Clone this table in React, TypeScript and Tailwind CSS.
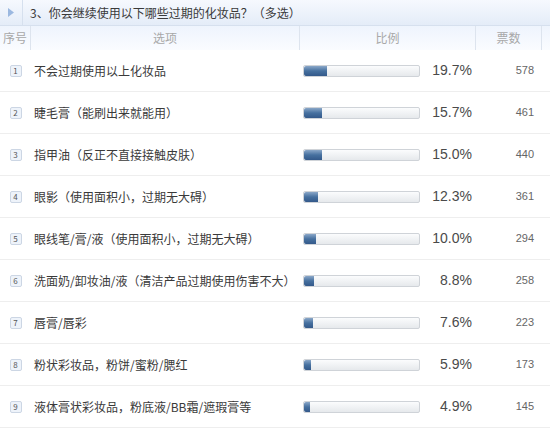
const rows = [
  { text: "不会过期使用以上化妆品", pct: 19.7, votes: 578 },
  { text: "睫毛膏（能刷出来就能用）", pct: 15.7, votes: 461 },
  { text: "指甲油（反正不直接接触皮肤）", pct: 15.0, votes: 440 },
  { text: "眼影（使用面积小，过期无大碍）", pct: 12.3, votes: 361 },
  { text: "眼线笔/膏/液（使用面积小，过期无大碍）", pct: 10.0, votes: 294 },
  { text: "洗面奶/卸妆油/液（清洁产品过期使用伤害不大）", pct: 8.8, votes: 258 },
  { text: "唇膏/唇彩", pct: 7.6, votes: 223 },
  { text: "粉状彩妆品，粉饼/蜜粉/腮红", pct: 5.9, votes: 173 },
  { text: "液体膏状彩妆品，粉底液/BB霜/遮瑕膏等", pct: 4.9, votes: 145 },
];

const font = { fontFamily: '"Noto Sans CJK SC", "Liberation Sans", sans-serif' };
const latin = { fontFamily: '"Liberation Sans", sans-serif' };

export default function App() {
  return (
    <div className="w-[550px] h-[430px] overflow-hidden bg-white text-[#333]" style={font}>
      {/* title bar */}
      <div className="flex h-[26px] border-b border-[#d6e0ee] bg-gradient-to-b from-[#f6f9fe] to-[#e4ecf8]">
        <div className="flex w-[23px] items-center justify-center border-r border-[#d6e0ee]">
          <svg width="6" height="9" viewBox="0 0 6 9">
            <path d="M0 0 L6 4.5 L0 9 Z" fill="#9bb8e0" />
          </svg>
        </div>
        <div className="flex items-center pl-[7px] text-[12px] leading-none text-[#3a3a3a]">
          3、你会继续使用以下哪些过期的化妆品？（多选）
        </div>
      </div>
      {/* header row */}
      <div className="flex h-[24px] items-stretch bg-gradient-to-b from-[#eef4fd] to-[#fafcff] text-[12px] text-[#a8a8a8]">
        <div className="flex w-[31px] items-center justify-center border-r border-[#dde4ee]">序号</div>
        <div className="flex w-[269px] items-center justify-center border-r border-[#dde4ee]">选项</div>
        <div className="flex w-[176px] items-center justify-center border-r border-[#dde4ee]">比例</div>
        <div className="flex w-[66px] items-center justify-center border-r border-[#dde4ee]">票数</div>
        <div className="flex-1" />
      </div>
      {rows.map((r, i) => (
        <div key={i} className="flex h-[42px] items-center border-b border-[#eeeeee]">
          <div className="flex w-[31px] justify-center">
            <span className="flex h-[12px] w-[12px] items-center justify-center rounded-[2px] border border-[#ccd6e4] bg-[#eef3fa] text-[8px] leading-none text-[#555]">
              {i + 1}
            </span>
          </div>
          <div className="w-[272px] pl-[3px] text-[12px] whitespace-nowrap text-[#3a3a3a]">{r.text}</div>
          <div className="h-[12px] w-[117px] overflow-hidden rounded-[2px] border border-[#cfd3d8] bg-gradient-to-b from-[#fbfcfd] to-[#e6e9ec]">
            <div
              className="h-full rounded-l-[2px] bg-gradient-to-b from-[#8aa7c8] via-[#46709f] to-[#33598a]"
              style={{ width: `${Math.max((r.pct / 100) * 117, 5)}px` }}
            />
          </div>
          <div className="w-[52px] text-right text-[14px] text-[#4a4a4a]" style={latin}>
            {r.pct.toFixed(1)}%
          </div>
          <div className="w-[62px] text-right text-[11px] text-[#666]" style={latin}>
            {r.votes}
          </div>
        </div>
      ))}
    </div>
  );
}
